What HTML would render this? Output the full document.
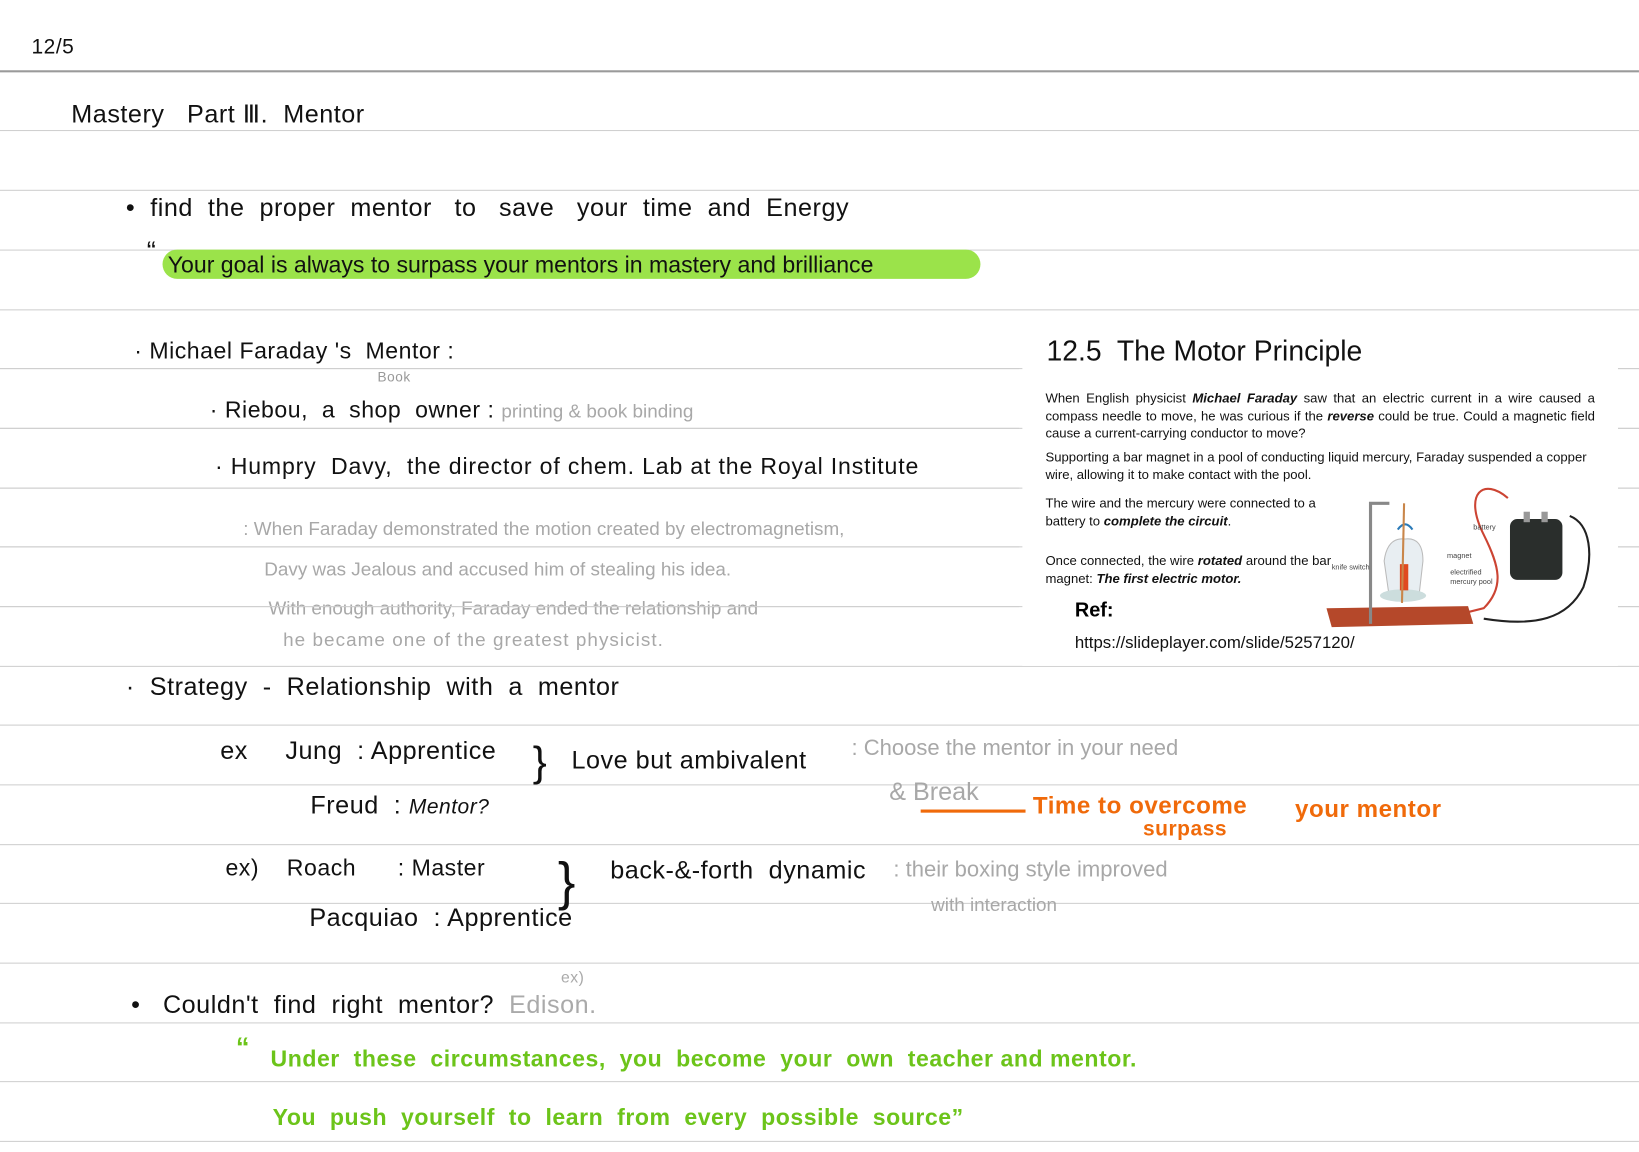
<!DOCTYPE html>
<html><head><meta charset="utf-8"><style>
html,body{margin:0;padding:0;background:#fff;overflow:hidden}
body{width:1639px;height:1152px;position:relative}
#c{position:absolute;left:0;top:0;width:1563px;height:1098px;transform:scale(1.0486);transform-origin:0 0;font-family:"Liberation Sans",sans-serif}
.l{position:absolute;left:0;width:1563px;height:1px;background:#cfcfcf}
.t{position:absolute;white-space:nowrap;color:#111;font-size:24px;letter-spacing:0.5px}
.g{color:#a8a8a8;font-size:18px;letter-spacing:0}
.gr{color:#6cc41a;font-size:22px;font-weight:bold}
.o{color:#f06a0a;font-weight:bold;font-size:23px}
#img{position:absolute;left:975px;top:300px;width:568px;height:335px;background:#fff;font-family:"Liberation Sans",sans-serif}
#img p{margin:0;font-size:12.5px;line-height:16.5px;color:#111;position:absolute}
</style></head><body><div id="c">
<div class="l" style="top:67px;height:2px;background:#9a9a9a"></div>
<div class="l" style="top:124px"></div><div class="l" style="top:181px"></div><div class="l" style="top:238px"></div><div class="l" style="top:295px"></div><div class="l" style="top:351px"></div><div class="l" style="top:408px"></div><div class="l" style="top:465px"></div><div class="l" style="top:521px"></div><div class="l" style="top:578px"></div><div class="l" style="top:635px"></div><div class="l" style="top:691px"></div><div class="l" style="top:748px"></div><div class="l" style="top:805px"></div><div class="l" style="top:861px"></div><div class="l" style="top:918px"></div><div class="l" style="top:975px"></div><div class="l" style="top:1031px"></div><div class="l" style="top:1088px"></div>

<div class="t" style="left:30px;top:34px;font-size:20px">12/5</div>
<div class="t" style="left:68px;top:95px">Mastery&nbsp;&nbsp; Part Ⅲ.&nbsp; Mentor</div>
<div class="t" style="left:120px;top:185px">•&nbsp; find&nbsp; the&nbsp; proper&nbsp; mentor&nbsp;&nbsp; to&nbsp;&nbsp; save&nbsp;&nbsp; your&nbsp; time&nbsp; and&nbsp; Energy</div>
<div style="position:absolute;left:155px;top:238px;width:780px;height:28px;background:#9be34a;border-radius:14px"></div>
<div class="t" style="left:140px;top:224px;font-size:26px">“</div>
<div class="t" style="left:160px;top:240px;font-size:22px;letter-spacing:0">Your goal is always to surpass your mentors in mastery and brilliance</div>

<div class="t" style="left:128px;top:322px;font-size:22px">· Michael Faraday 's&nbsp; Mentor :</div>
<div class="t" style="left:360px;top:352px;font-size:13px;color:#999">Book</div>
<div class="t" style="left:200px;top:378px;font-size:22px">· Riebou,&nbsp; a&nbsp; shop&nbsp; owner : <span class="g">printing &amp; book binding</span></div>
<div class="t" style="left:205px;top:432px;font-size:22px;letter-spacing:0.8px">· Humpry&nbsp; Davy,&nbsp; the director of chem. Lab at the Royal Institute</div>
<div class="t g" style="left:232px;top:494px">: When Faraday demonstrated the motion created by electromagnetism,</div>
<div class="t g" style="left:252px;top:533px">Davy was Jealous and accused him of stealing his idea.</div>
<div class="t g" style="left:256px;top:570px">With enough authority, Faraday ended the relationship and</div>
<div class="t g" style="left:270px;top:600px;letter-spacing:1px">he became one of the greatest physicist.</div>

<div class="t" style="left:120px;top:642px">·&nbsp; Strategy&nbsp; -&nbsp; Relationship&nbsp; with&nbsp; a&nbsp; mentor</div>
<div class="t" style="left:210px;top:703px">ex&nbsp;&nbsp;&nbsp;&nbsp; Jung&nbsp; : Apprentice</div>
<div class="t" style="left:296px;top:755px">Freud&nbsp; : <i style="font-size:20px">Mentor?</i></div>
<div class="t" style="left:508px;top:705px;font-size:40px;font-weight:100">}</div>
<div class="t" style="left:545px;top:712px">Love but ambivalent</div>
<div class="t g" style="left:812px;top:702px;font-size:21px">: Choose the mentor in your need</div>
<div class="t g" style="left:848px;top:742px;font-size:24px">&amp; Break</div>
<div style="position:absolute;left:878px;top:772px;width:100px;height:3px;background:#f06a0a"></div>
<div class="t o" style="left:985px;top:755px">Time to overcome</div>
<div class="t o" style="left:1090px;top:780px;font-size:20px">surpass</div>
<div class="t o" style="left:1235px;top:758px">your mentor</div>

<div class="t" style="left:215px;top:815px;font-size:22px">ex)&nbsp;&nbsp;&nbsp; Roach&nbsp;&nbsp;&nbsp;&nbsp;&nbsp; : Master</div>
<div class="t" style="left:295px;top:862px">Pacquiao&nbsp; : Apprentice</div>
<div class="t" style="left:532px;top:812px;font-size:50px;font-weight:100">}</div>
<div class="t" style="left:582px;top:817px">back-&amp;-forth&nbsp; dynamic</div>
<div class="t g" style="left:852px;top:818px;font-size:21px">: their boxing style improved</div>
<div class="t g" style="left:888px;top:853px">with interaction</div>

<div class="t" style="left:125px;top:945px">•&nbsp;&nbsp; Couldn't&nbsp; find&nbsp; right&nbsp; mentor?&nbsp; <span style="color:#aaa">Edison.</span></div>
<div class="t" style="left:535px;top:924px;font-size:15px;color:#aaa">ex)</div>
<div class="t gr" style="left:225px;top:983px;font-size:26px">“</div>
<div class="t gr" style="left:258px;top:997px">Under&nbsp; these&nbsp; circumstances,&nbsp; you&nbsp; become&nbsp; your&nbsp; own&nbsp; teacher and mentor.</div>
<div class="t gr" style="left:260px;top:1053px">You&nbsp; push&nbsp; yourself&nbsp; to&nbsp; learn&nbsp; from&nbsp; every&nbsp; possible&nbsp; source”</div>

<div id="img">
<div style="position:absolute;left:23px;top:20px;font-size:27px;color:#111">12.5&nbsp; The Motor Principle</div>
<p style="left:22px;top:72px;width:524px;text-align:justify">When English physicist <b><i>Michael Faraday</i></b> saw that an electric current in a wire caused a compass needle to move, he was curious if the <b><i>reverse</i></b> could be true. Could a magnetic field cause a current-carrying conductor to move?</p>
<p style="left:22px;top:128px;width:530px">Supporting a bar magnet in a pool of conducting liquid mercury, Faraday suspended a copper wire, allowing it to make contact with the pool.</p>
<p style="left:22px;top:172px;width:275px">The wire and the mercury were connected to a battery to <b><i>complete the circuit</i></b>.</p>
<p style="left:22px;top:227px;width:275px">Once connected, the wire <b><i>rotated</i></b> around the bar magnet: <b><i>The first electric motor.</i></b></p>
<div style="position:absolute;left:50px;top:272px;font-size:19px;font-weight:bold">Ref:</div>
<div style="position:absolute;left:50px;top:305px;font-size:16px;color:#111">https://slideplayer.com/slide/5257120/</div>
<svg style="position:absolute;left:290px;top:150px" width="260" height="155" viewBox="0 0 260 155">
<path d="M173 25 C150 5 130 20 150 60 C165 90 170 110 150 130 L110 140" fill="none" stroke="#c43" stroke-width="2"/>
<path d="M232 42 C252 50 255 80 245 110 C230 140 200 148 150 140" fill="none" stroke="#222" stroke-width="2"/>
<rect x="175" y="45" width="50" height="58" rx="7" fill="#2a2e2c"/>
<rect x="188" y="38" width="6" height="10" fill="#999"/><rect x="205" y="38" width="6" height="10" fill="#999"/>
<path d="M0 130 L135 128 L140 145 L5 148 Z" fill="#b5482a"/>
<path d="M42 145 L42 30 L60 30" fill="none" stroke="#888" stroke-width="3"/>
<path d="M55 85 Q58 62 75 64 Q92 62 92 85 L88 120 L60 120 Z" fill="#e8eef2" stroke="#bbb"/>
<ellipse cx="73" cy="118" rx="22" ry="6" fill="#cdd"/>
<rect x="70" y="88" width="8" height="25" fill="#e04a20"/>
<path d="M68 55 Q75 45 82 55" fill="none" stroke="#2a7ab8" stroke-width="2"/>
<path d="M74 30 L72 125" stroke="#c9864a" stroke-width="2"/>
<text x="5" y="93" font-size="7" fill="#444" font-family="Liberation Sans">knife switch</text>
<text x="115" y="82" font-size="7" fill="#444" font-family="Liberation Sans">magnet</text>
<text x="118" y="98" font-size="7" fill="#444" font-family="Liberation Sans">electrified</text>
<text x="118" y="107" font-size="7" fill="#444" font-family="Liberation Sans">mercury pool</text>
<text x="140" y="55" font-size="7" fill="#444" font-family="Liberation Sans">battery</text>
</svg>
</div>
<div class="l" style="top:351px;left:1543px;width:20px"></div><div class="l" style="top:408px;left:1543px;width:20px"></div><div class="l" style="top:465px;left:1543px;width:20px"></div><div class="l" style="top:521px;left:1543px;width:20px"></div><div class="l" style="top:578px;left:1543px;width:20px"></div>
<div class="l" style="top:351px;width:972px"></div><div class="l" style="top:408px;width:972px"></div><div class="l" style="top:465px;width:972px"></div><div class="l" style="top:521px;width:972px"></div><div class="l" style="top:578px;width:972px"></div>
</div></body></html>
